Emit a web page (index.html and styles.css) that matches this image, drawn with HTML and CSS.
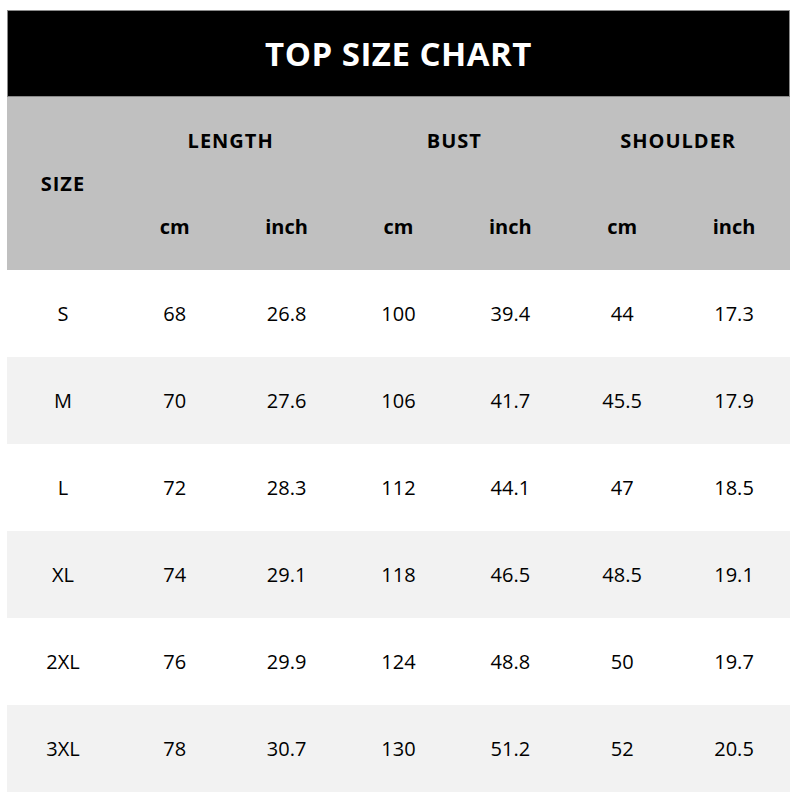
FILE: index.html
```html
<!DOCTYPE html>
<html>
<head>
<meta charset="utf-8">
<link rel="stylesheet" href="styles.css">
</head>
<body>
<table class="chart">
  <thead>
    <tr class="title-row"><th colspan="7" class="title">TOP SIZE CHART</th></tr>
    <tr class="head-row">
      <th rowspan="2" class="caps">SIZE</th>
      <th colspan="2" class="caps">LENGTH</th>
      <th colspan="2" class="caps">BUST</th>
      <th colspan="2" class="caps">SHOULDER</th>
    </tr>
    <tr class="head-row">
      <th>cm</th><th>inch</th><th>cm</th><th>inch</th><th>cm</th><th>inch</th>
    </tr>
  </thead>
  <tbody>
    <tr><td>S</td><td>68</td><td>26.8</td><td>100</td><td>39.4</td><td>44</td><td>17.3</td></tr>
    <tr class="alt"><td>M</td><td>70</td><td>27.6</td><td>106</td><td>41.7</td><td>45.5</td><td>17.9</td></tr>
    <tr><td>L</td><td>72</td><td>28.3</td><td>112</td><td>44.1</td><td>47</td><td>18.5</td></tr>
    <tr class="alt"><td>XL</td><td>74</td><td>29.1</td><td>118</td><td>46.5</td><td>48.5</td><td>19.1</td></tr>
    <tr><td>2XL</td><td>76</td><td>29.9</td><td>124</td><td>48.8</td><td>50</td><td>19.7</td></tr>
    <tr class="alt"><td>3XL</td><td>78</td><td>30.7</td><td>130</td><td>51.2</td><td>52</td><td>20.5</td></tr>
  </tbody>
</table>
</body>
</html>
```
FILE: styles.css
```css
html, body {
  margin: 0;
  padding: 0;
  background: #ffffff;
}
body {
  padding: 10px 0 0 7px;
  font-family: "Open Sans", "Noto Sans", sans-serif;
  color: #000;
}
.chart {
  width: 783px;
  border-collapse: collapse;
  table-layout: fixed;
}
.chart th, .chart td {
  padding: 0;
  text-align: center;
  vertical-align: middle;
}
.title-row .title {
  height: 87px;
  background: #000;
  color: #fff;
  font-size: 33px;
  font-weight: 700;
  letter-spacing: 0.5px;
  box-shadow: inset 0 0 0 1px #8a8a8a;
}
.head-row th {
  height: 86.5px;
  background: #c0c0c0;
  font-size: 20px;
  font-weight: 700;
}
.head-row th.caps {
  letter-spacing: 1px;
}
.chart td {
  height: 87px;
  font-size: 20px;
  font-weight: 400;
}
.chart tr.alt td {
  background: #f2f2f2;
}
```
